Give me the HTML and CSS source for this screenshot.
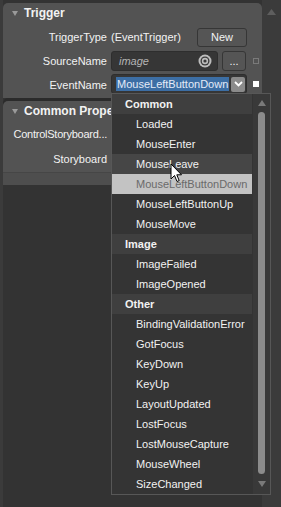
FILE: index.html
```html
<!DOCTYPE html>
<html lang="en">
<head>
  <meta charset="UTF-8" />
  <meta name="viewport" content="width=device-width, initial-scale=1.0"/>
  <title>Triggers</title>
  <link rel="stylesheet" href="styles.css">
</head>
<body>
  <div class="window">
    <div class="edge"></div>

    <div class="inspector">
      <section class="group trigger">
        <div class="group-head"><span class="caret"></span><span class="title">Trigger</span></div>

        <div class="row">
          <label>TriggerType</label>
          <div class="value">
            <span class="plain">(EventTrigger)</span>
            <button class="btn new">New</button>
          </div>
        </div>

        <div class="row">
          <label>SourceName</label>
          <div class="value">
            <div class="field">
              <span class="hint">image</span>
              <svg class="target" width="14" height="14" viewBox="0 0 14 14">
                <circle cx="7" cy="7" r="6.5" fill="#bdbdbd"/>
                <circle cx="7" cy="7" r="4.5" fill="#3a3a3a"/>
                <circle cx="7" cy="7" r="3.2" fill="#bdbdbd"/>
                <circle cx="7" cy="7" r="1.6" fill="#3a3a3a"/>
              </svg>
            </div>
            <button class="btn more">...</button>
          </div>
          <span class="marker"></span>
        </div>

        <div class="row">
          <label>EventName</label>
          <div class="value">
            <div class="combo">
              <span class="sel">MouseLeftButtonDown</span>
              <span class="drop">
                <svg width="9" height="6" viewBox="0 0 9 6">
                  <path d="M1 1 L4.5 4.5 L8 1" fill="none" stroke="#fff" stroke-width="1.8"/>
                </svg>
              </span>
            </div>
          </div>
          <span class="marker on"></span>
        </div>
      </section>

      <section class="group common">
        <div class="group-head"><span class="caret"></span><span class="title cut">Common Prope</span></div>
        <div class="row">
          <label class="tight">ControlStoryboard...</label>
          <div class="value"></div>
        </div>
        <div class="row tall">
          <label>Storyboard</label>
          <div class="value"></div>
        </div>
        <div class="group-foot"></div>
      </section>
    </div>

    <div class="vscroll">
      <svg width="9" height="6" viewBox="0 0 9 6"><path d="M0 6 L4.5 0 L9 6 Z" fill="#5e5e5e"/></svg>
    </div>

    <div class="popup">
      <ul class="events">
        <li class="cat">Common</li>
        <li>Loaded</li>
        <li>MouseEnter</li>
        <li class="hover">MouseLeave</li>
        <li class="picked">MouseLeftButtonDown</li>
        <li>MouseLeftButtonUp</li>
        <li>MouseMove</li>
        <li class="cat">Image</li>
        <li>ImageFailed</li>
        <li>ImageOpened</li>
        <li class="cat">Other</li>
        <li>BindingValidationError</li>
        <li>GotFocus</li>
        <li>KeyDown</li>
        <li>KeyUp</li>
        <li>LayoutUpdated</li>
        <li>LostFocus</li>
        <li>LostMouseCapture</li>
        <li>MouseWheel</li>
        <li>SizeChanged</li>
      </ul>
      <div class="bar">
        <svg width="8" height="6" viewBox="0 0 8 6"><path d="M0 6 L4 0 L8 6 Z" fill="#7a7a7a"/></svg>
        <div class="thumb"></div>
        <svg width="8" height="6" viewBox="0 0 8 6"><path d="M0 0 L4 6 L8 0 Z" fill="#7a7a7a"/></svg>
      </div>
    </div>

    <!-- mouse pointer over the list -->
    <svg class="cursor" width="13" height="20" viewBox="0 0 13 20">
      <path d="M1 1 L1 16 L4.5 12.5 L7 18.5 L9.2 17.6 L6.8 11.8 L11.5 11.8 Z" fill="#fff" stroke="#000" stroke-width="1" stroke-linejoin="round"/>
    </svg>
  </div>
</body>
</html>
```

FILE: styles.css
```css
* {
  box-sizing: border-box;
}

body {
  margin: 0;
  background: #333333;
  font-family: "Liberation Sans", Arial, sans-serif;
  font-size: 11px;
  color: #f2f2f2;
}

.window {
  position: relative;
  display: flex;
  width: 281px;
  height: 507px;
  overflow: hidden;
}

.edge {
  width: 3px;
  background: #3b3b3b;
}

.inspector {
  flex: 1;
  padding-top: 3px;
}

.vscroll {
  width: 19px;
  background: #3b3b3b;
  display: flex;
  justify-content: center;
  padding-top: 9px;
}

.group {
  background: #535353;
  border-radius: 5px 5px 0 0;
}

.trigger {
  padding-bottom: 1px;
}

.common {
  margin-top: 3px;
  box-shadow: 0 -3px 0 #2b2b2b;
}

.group-head {
  height: 22px;
  display: flex;
  align-items: center;
  padding: 0 0 2px 9px;
  font-size: 12px;
  font-weight: bold;
  white-space: nowrap;
}

.caret {
  width: 0;
  height: 0;
  border-left: 3px solid transparent;
  border-right: 3px solid transparent;
  border-top: 5px solid #9a9a9a;
  margin: 1px 6px 0 0;
}

.row {
  display: grid;
  grid-template-columns: 108px 136px 12px;
  align-items: center;
  height: 24px;
}

.common .row {
  height: 22px;
}

.common .row.tall {
  height: 27px;
}

.row label {
  text-align: right;
  padding: 0 4px 0 4px;
  white-space: nowrap;
}

.row label.tight {
  letter-spacing: -0.25px;
}

.value {
  display: flex;
  align-items: center;
  gap: 4px;
}

.plain {
  flex: 1;
}

.btn {
  font-family: inherit;
  font-size: 11px;
  color: #f2f2f2;
  background: #555555;
  border: 1px solid #363636;
  border-radius: 3px;
  padding: 0;
}

.new {
  width: 50px;
  height: 19px;
  margin-left: auto;
}

.more {
  width: 24px;
  height: 20px;
  line-height: 14px;
}

.field {
  width: 107px;
  height: 20px;
  display: flex;
  align-items: center;
  justify-content: space-between;
  padding: 0 5px 0 7px;
  background: #363636;
  border: 1px solid #2e2e2e;
  border-radius: 3px;
}

.hint {
  font-style: italic;
  color: #b4b4b4;
}

.combo {
  width: 136px;
  height: 20px;
  display: flex;
  align-items: center;
  justify-content: space-between;
  padding: 0 1px 0 4px;
  background: #363636;
  border: 1px solid #2e2e2e;
  border-radius: 3px;
  margin-top: -2px;
}

.sel {
  background: #3c6ea4;
  color: #e4ebf8;
  line-height: 14px;
  padding: 0 1px;
}

.drop {
  width: 14px;
  height: 15px;
  display: flex;
  align-items: center;
  justify-content: center;
  background: #8b8b8b;
  border-radius: 2px;
}

.marker {
  justify-self: end;
  width: 6px;
  height: 6px;
  border: 1px solid #7a7a7a;
}

.marker.on {
  background: #ffffff;
  border-color: #ffffff;
  margin-top: -2px;
}

.group-foot {
  height: 13px;
  border-top: 1px solid #464646;
  background: #4e4e4e;
}

.popup {
  position: absolute;
  left: 111px;
  top: 93px;
  width: 160px;
  height: 402px;
  display: flex;
  background: #343434;
  border: 1px solid #575757;
}

.events {
  flex: 1;
  list-style: none;
  margin: 0;
  padding: 0 1px 0 0;
}

.events li {
  height: 20px;
  line-height: 20px;
  padding-left: 24px;
  white-space: nowrap;
}

.events li.cat {
  padding-left: 13px;
  font-weight: bold;
  background: #3f3f3f;
}

.events li.hover {
  background: #464646;
}

.events li.picked {
  background: #c3c3c3;
  color: #6a6a6a;
}

.bar {
  width: 17px;
  display: flex;
  flex-direction: column;
  align-items: center;
  padding-top: 6px;
  background: #393939;
}

.thumb {
  width: 7px;
  height: 362px;
  margin: 6px 0 7px;
  border-radius: 4px;
  background: #8c8c8c;
}

.cursor {
  position: absolute;
  left: 170px;
  top: 163px;
}
```
